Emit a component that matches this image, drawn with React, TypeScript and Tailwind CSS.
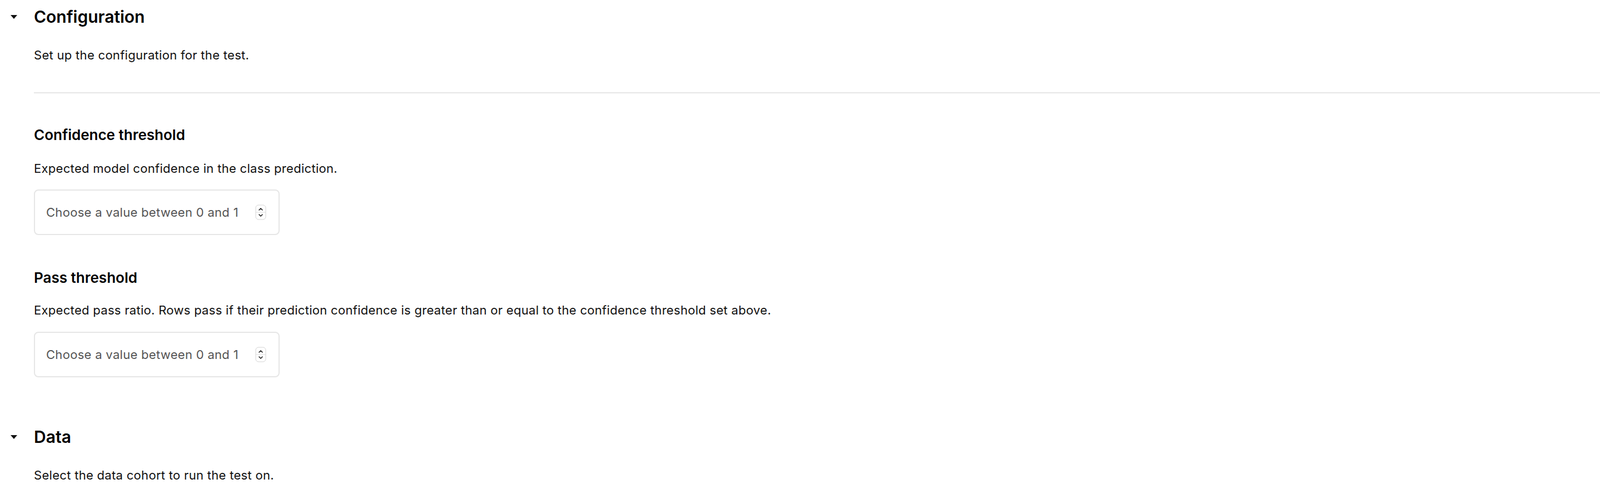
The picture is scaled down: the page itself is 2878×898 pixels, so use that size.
import React from 'react';

const font = { fontFamily: 'Inter, "Noto Sans", sans-serif' };

function Caret() {
  return (
    <svg width="12" height="7" viewBox="0 0 12 7" className="block">
      <polygon points="0,0 12,0 6,7" fill="#111" />
    </svg>
  );
}

function Spinner() {
  return (
    <svg width="20" height="28" viewBox="0 0 20 28" className="block shrink-0">
      <rect x="1" y="1" width="18" height="26" rx="5" fill="#fff" stroke="#d4d4d4" strokeWidth="1" />
      <line x1="1" y1="14" x2="19" y2="14" stroke="#dcdcdc" strokeWidth="1" />
      <polyline points="7,10 10,7 13,10" fill="none" stroke="#222" strokeWidth="1.6" strokeLinecap="round" strokeLinejoin="round" />
      <polyline points="7,18 10,21 13,18" fill="none" stroke="#222" strokeWidth="1.6" strokeLinecap="round" strokeLinejoin="round" />
    </svg>
  );
}

function NumberField() {
  return (
    <div className="flex h-[82px] w-[442px] items-center rounded-lg border-2 border-[#e6e6e6] bg-white pl-[20px] pr-[22px]">
      <input
        type="number"
        min={0}
        max={1}
        step={0.01}
        placeholder="Choose a value between 0 and 1"
        className="min-w-0 flex-1 bg-transparent text-[22px] tracking-[0.3px] text-[#111] outline-none placeholder:text-[#555] [appearance:textfield] [&::-webkit-inner-spin-button]:appearance-none [&::-webkit-outer-spin-button]:appearance-none"
      />
      <Spinner />
    </div>
  );
}

function SectionHeader({ title }: { title: string }) {
  return (
    <div className="flex h-[60px] items-center">
      <div className="flex w-[61px] shrink-0 pl-[19px]">
        <Caret />
      </div>
      <h2 className="text-[30px] font-semibold leading-none text-black">{title}</h2>
    </div>
  );
}

export default function App() {
  return (
    <div className="min-h-screen bg-white text-[#111]" style={font}>
      <SectionHeader title="Configuration" />
      <div className="pl-[61px] text-[22px] leading-[28px] tracking-[0.3px]">
        <p className="mt-[25px]">Set up the configuration for the test.</p>
        <div className="mt-[53px] h-[2px] bg-[#e6e6e6]" />

        <h3 className="mt-[59px] text-[26px] font-semibold leading-[32px] tracking-normal text-black">Confidence threshold</h3>
        <p className="mt-[30px]">Expected model confidence in the class prediction.</p>
        <div className="mt-[24px]">
          <NumberField />
        </div>

        <h3 className="mt-[61px] text-[26px] font-semibold leading-[32px] tracking-normal text-black">Pass threshold</h3>
        <p className="mt-[28px]">
          Expected pass ratio. Rows pass if their prediction confidence is greater than or equal to the confidence threshold set above.
        </p>
        <div className="mt-[25px]">
          <NumberField />
        </div>
      </div>

      <div className="mt-[77px]">
        <SectionHeader title="Data" />
      </div>
      <div className="pl-[61px] text-[22px] leading-[28px] tracking-[0.3px]">
        <p className="mt-[25px]">Select the data cohort to run the test on.</p>
      </div>
    </div>
  );
}
